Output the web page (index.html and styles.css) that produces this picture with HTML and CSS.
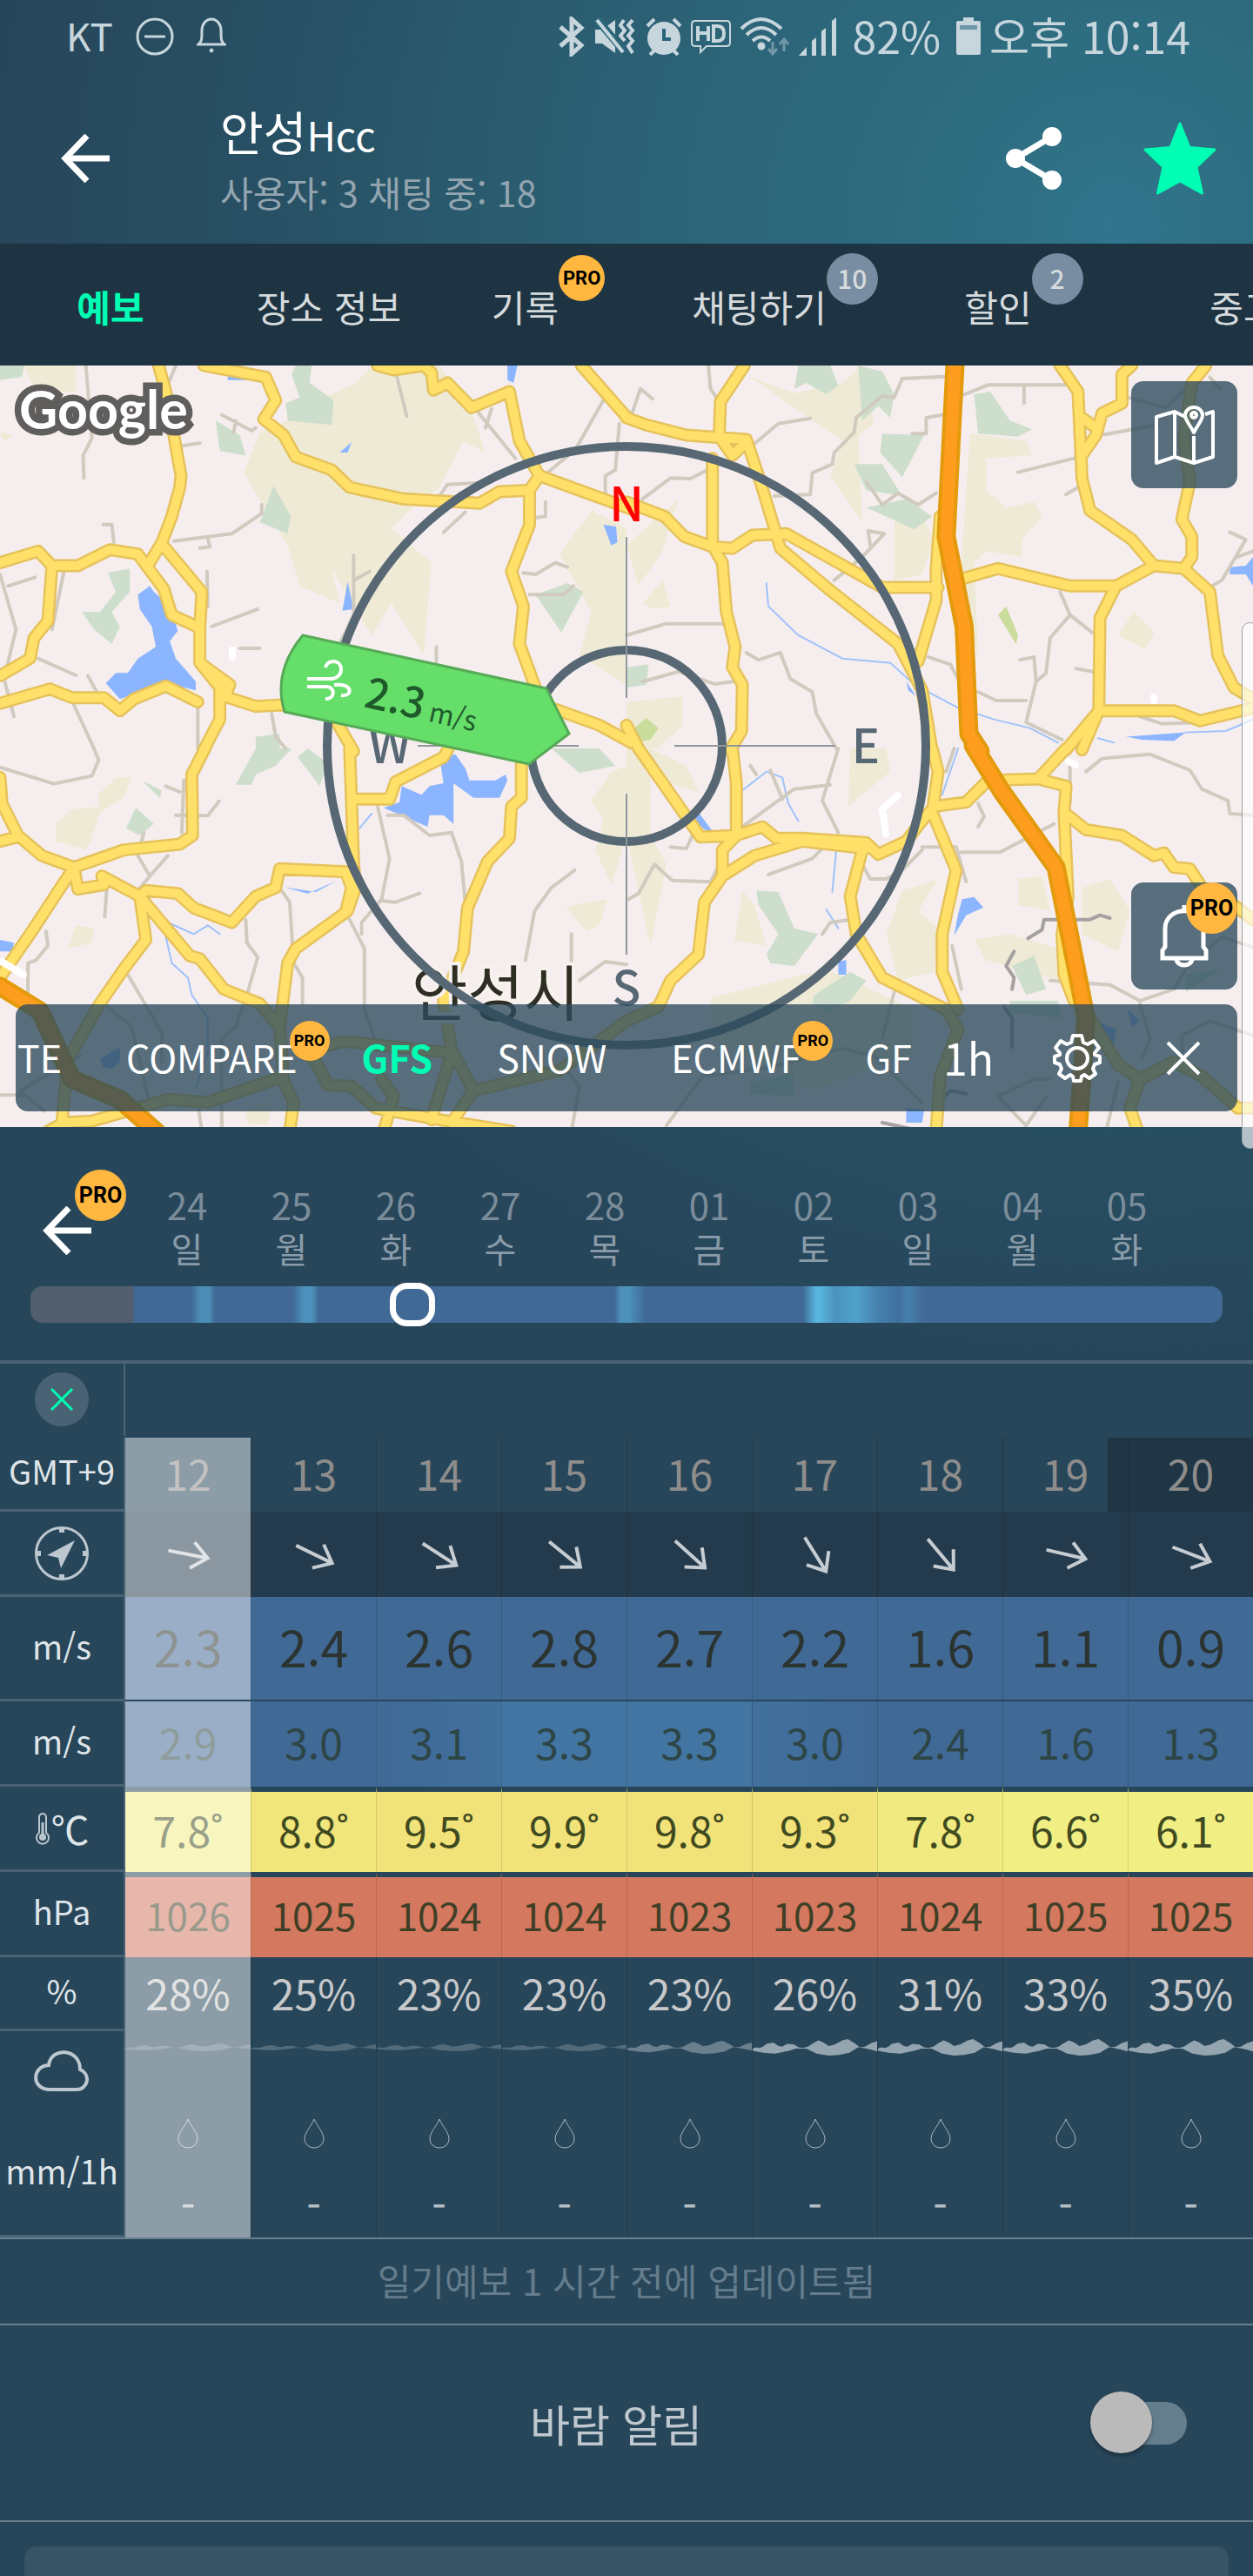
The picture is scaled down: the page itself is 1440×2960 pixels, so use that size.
FILE: index.html
```html
<!DOCTYPE html>
<html lang="ko">
<head>
<meta charset="utf-8">
<meta name="viewport" content="width=device-width, initial-scale=1">
<title>안성Hcc</title>
<link rel="stylesheet" href="styles.css">
</head>
<body>
<svg class="defs" aria-hidden="true">
  <symbol id="back" viewBox="0 0 56 56"><path d="M30 2 5 28l25 26M5 28h51" fill="none" stroke="#fff" stroke-width="7"/></symbol>
  <symbol id="arrow" viewBox="-28 -28 56 56"><path d="M-23 0H22M5-15 23 0 5 15" fill="none" stroke="#c5ccd2" stroke-width="4"/></symbol>
  <symbol id="drop" viewBox="0 0 24 36"><path d="M12 1C9 9 1 16 1 24a11 10 0 0 0 22 0C23 16 15 9 12 1z" fill="none" stroke="#a9b6bf" stroke-width="1"/></symbol>
  <symbol id="wave" viewBox="0 0 144 24" preserveAspectRatio="none"><path d="M0 14 4 12 8 13 12 11 16 7 24 5 30 10 34 11 40 7 48 8 53 12 58 13 64 11 70 6 76 2 82 5 88 10 95 8 104 2 110 0 118 6 124 12 130 11 137 6 144 3V18L136 15 128 13 122 12 112 20 100 23 88 24 74 21 62 14 50 14 42 17 26 21 12 20 0 17z" fill="#cfd8dd"/></symbol>
</svg>

<header class="top">
  <div class="status">
    <span>KT</span>
    <svg width="44" height="44" viewBox="0 0 44 44" class="line"><circle cx="22" cy="22" r="20"/><path d="M10 22h24"/></svg>
    <svg width="34" height="44" viewBox="0 0 34 44" class="line"><path d="M2 31h30c-4-3-4-6-4-16a11 13 0 0 0-22 0c0 10 0 13-4 16z"/><circle cx="17" cy="38" r="2" fill="#c7d6dd" stroke-width="1"/></svg>
    <div class="status-right">
      <svg width="30" height="46" viewBox="0 0 30 46" class="line thick"><path d="M2 12 26 33 15 43V3l11 10L2 34"/></svg>
      <svg width="50" height="46" viewBox="2 0 50 46" class="solid"><path d="M4 15h8L27 4v38L12 31H4z"/><path d="M6 3l32 38" stroke="#2d667b" stroke-width="9"/><path d="M6 4l30 37" stroke="#c7d6dd" stroke-width="4"/><path d="M37 4l-4 6 5 6-5 6 5 6M47 4l-5 6 5 6-5 6 5 6-5 6 5 8" fill="none" stroke="#c7d6dd" stroke-width="4"/></svg>
      <svg width="42" height="44" viewBox="0 0 42 44" class="solid"><circle cx="21" cy="24" r="19"/><path d="M2 10l8-8M40 10l-8-8M10 38l-5 5M32 38l5 5" stroke="#c7d6dd" stroke-width="4"/><path d="M21 13v12h8" fill="none" stroke="#2d667b" stroke-width="4"/></svg>
      <svg width="46" height="40" viewBox="0 0 46 40" class="line"><path d="M5 2h36q4 0 4 4v21q0 4-4 4H18l-7 7v-7H5q-4 0-4-4V6q0-4 4-4z" stroke-width="2"/><path d="M8 8v17M20 8v17M8 16h12M26 8v17h5q7 0 7-8.500T31 8z" stroke-width="4"/></svg>
      <svg width="58" height="46" viewBox="0 0 58 46" class="line"><path d="M2 14q22-22 46 0M8 21q17-16 34 0M15 28q10-9 20 0" stroke-width="4"/><circle cx="25" cy="34" r="3" class="solid"/><path d="M38 29v14m-5-6 5 6 5-6M51 40V26m-5 6 5-6 5 6" opacity=".45"/></svg>
      <svg width="44" height="44" viewBox="0 0 44 44" class="solid"><path d="M0 44 9 34v10zM15 44V27l5-4v21zM26 44V16l5-4v32zM38 44V4l5-4v44z"/></svg>
      <span class="pct">82%</span>
      <svg width="28" height="44" viewBox="0 0 28 44" class="solid"><path d="M8 0h12v4h6q2 0 2 2v34q0 3-2 3H2q-2 0-2-3V6q0-2 2-2h6z"/><path d="M4 9h20v5H4z" fill="#6c98a8"/></svg>
      <span>오후 10:14</span>
    </div>
  </div>
  <div class="titlebar">
    <button class="icon-btn" aria-label="뒤로"><svg width="56" height="56"><use href="#back"/></svg></button>
    <div class="titles">
      <h1>안성<small>Hcc</small></h1>
      <p>사용자: 3 채팅 중: 18</p>
    </div>
    <button class="icon-btn" aria-label="공유"><svg width="64" height="72" viewBox="0 0 64 72"><path d="M11 36 53 11M11 36l42 25" stroke="#fff" stroke-width="7"/><g fill="#fff"><circle cx="11" cy="36" r="11"/><circle cx="53" cy="11" r="11"/><circle cx="53" cy="61" r="11"/></g></svg></button>
    <button class="icon-btn" aria-label="즐겨찾기"><svg width="84" height="84" viewBox="0 0 84 84"><path d="M42 2 53 29.500 82 32 61 52 67.500 82 42 68 16.500 82 23 52 2 32 31 29.500z" fill="#00ffb4" stroke="#00ffb4" stroke-width="3" stroke-linejoin="round"/></svg></button>
  </div>
</header>

<nav class="tabs">
  <a href="#forecast" class="active">예보</a>
  <a href="#spot">장소 정보</a>
  <a href="#history">기록<b class="badge pro mid">PRO</b></a>
  <a href="#chat">채팅하기<b class="badge count">10</b></a>
  <a href="#deals">할인<b class="badge count">2</b></a>
  <a href="#used" class="last">중고</a>
</nav>

<section class="map">
  <svg class="canvas" viewBox="0 0 1440 875" preserveAspectRatio="xMidYMid slice">
    <defs>
      <g id="roads">
        <path transform="scale(.4592 .3333)" d="M397 0 415 90 435 240 453 380 450 420 430 520 405 610 370 690M0 680 95 640 130 690 195 690 275 635 345 650 410 770 430 860 500 905M405 615 505 780 500 905 500 1025 575 1100 565 1140M500 1025 550 1110 550 1220 510 1325M130 690 120 880 85 940 75 1010 0 1070M0 1165 125 1115 180 1145 260 1145 300 1190 335 1150 415 1105 495 1160M560 1140 640 1175 705 1170 830 1200 885 1330M510 0 665 40 690 120 660 185 710 240 740 315 830 360 875 420 1010 460 1200 475 1250 435 1325 430 1350 380 1300 260 1275 90 1180 145 1120 60 1085 85 1080 25 1060 0 985 15 945 0M1350 380 1580 495M1325 430 1325 550 1280 710 1310 830 1300 960 1340 1110M1390 1185 1500 1240 1580 1300M1455 0 1570 180"/>
        <path transform="translate(720) scale(.4592 .3333)" d="M295 0 235 125 232 245 265 310 300 265M0 180 50 205 150 240 300 255 335 400 370 560 385 630 505 770 680 960 740 1120 765 1330M215 320V620L240 680 250 850 272 970 265 1040 290 1100 288 1260 260 1325M0 470 95 520 145 590 215 625 265 630 315 585 400 580 640 765 780 765M785 520 775 700 775 810 730 1020M840 735 930 700 1110 760 1225 760 1320 690 1395 700 1415 660 1415 590 1390 530 1410 400 1395 250 1415 60 1450 0M1085 0 1130 90 1140 390 1160 500 1265 600 1320 690M1265 0 1240 30 1240 130 1190 165 1175 240 1140 310M1140 180 1180 220M1225 760 1185 870 1182 1190 1100 1325M1182 1190 1140 1325M1182 1190 1370 1190 1435 1225 1570 1180M1395 700 1460 780 1480 1000 1520 1110 1568 1150"/>
        <path transform="translate(0 440) scale(.4592 .3333)" d="M515-5 480 90 482 300 450 330 310 350 185 410 105 370 45 300 5 190 0 100M0 320 45 305M185 410 75 640 0 790M185 410 195 485 260 470 255 440 350 510 475 715 500 725 560 830 650 880 700 960 710 1150 735 1220 725 1320M350 510 365 490 445 500 485 550 580 600 640 510 690 480 700 415 865 425 880 480 865 565 740 690 720 740 700 960M350 510 365 660 310 760 250 880 170 1070 155 1290M875 0 885 400 890 480 870 560M880 175 975 175 990 115 1110 30 1130-20M1305 40 1305 170 1280 200 1275 310 1220 390 1170 550 1160 700 1110 870 1130 1040 1185 1180 1130 1290M120 1320 160 1290 230 1285 420 1210 520 1220 690 1140M780 1040 860 1010 1130 1050M740 1010 790 1080 820 1160 880 1165 940 1240 1100 1280 1280 1320M1185 1180 1400 1110 1470 1040 1568 940M955 1140 985 1200 960 1320M1130 1050 1080 1280"/>
        <path transform="translate(720 440) scale(.4592 .3333)" d="M0-80 30 0 185 305 275 300 340 270 375 310 440 310 600 325 630 365 700 320 745 240 770 200 850 185 905 110 1030 105 1100 0M440 320 600 345M265 0 275 120 275 300 240 350 240 440 195 530 180 710 110 800 80 890 0 940M240 440 320 370 440 320M590 350 560 510 575 640 640 790 800 900 830 970 785 1130 775 1320M765 0 780 80 765 220 825 420 790 640 790 770 830 900M1030 105 1100 130 1095 220 1150 280 1240 300 1320 370 1345 360 1370 410 1410 415 1450 500M1095 220 1105 510 1090 640 1095 780 1120 870M1520 540 1568 590M1160 930 1230 1090 1285 1140 1370 1080 1440 1130 1530 1240 1568 1240M1285 1140 1260 1240 1280 1320"/>
      </g>
      <g id="highway">
        <path transform="translate(720) scale(.4592 .3333)" d="M822 0 800 590 845 900 857 1270 885 1330"/>
        <path transform="translate(0 440) scale(.4592 .3333)" d="M0 820 100 905 180 1140 300 1210 390 1320"/>
        <path transform="translate(720 440) scale(.4592 .3333)" d="M868-10 940 150 1075 410 1120 720 1150 930 1130 1320"/>
      </g>
    </defs>
    <rect width="1440" height="875" fill="#f6eeee"/>
    <g fill="#efead6">
      <path transform="scale(.4592 .3333)" d="M780 130 890 60 930 0 1100 0 1180 160 1215 300 1160 260 1100 420 1040 480 980 560 1080 680 1060 1000 980 820 930 930 830 700 850 820 750 760 720 620 610 370 650 230 740 180zM60 0 190 0 190 90 90 95zM1480 500 1568 560V1100L1450 1000 1480 850 1400 650zM0 230 30 240 10 265z"/>
      <path transform="translate(720) scale(.4592 .3333)" d="M310 40 420 95 540 60 590 0 620 200 580 240 590 540 510 380 540 260zM860 235 1000 260 1015 310 900 320 900 430 950 490 1020 470 1040 520 990 600 990 660 900 640 870 680 880 1000 830 830zM670 540 740 520 770 600 740 720 670 740zM1270 845 1320 920 1300 980 1230 930zM0 620 130 460 90 640 30 760zM40 820 90 740 110 830 70 840zM0 1160 140 1140 140 1240 80 1320H0z"/>
      <path transform="translate(0 440) scale(.4592 .3333)" d="M290 100 330 100 310 170 250 220 230 310 215 350 140 320 140 260 180 210 250 200 245 160zM190 610 235 620 230 670 170 690zM1530 80 1568 60V300L1530 470 1490 350 1510 250 1480 180zM1415 550 1450 535 1520 520 1500 610 1470 630zM610 1240 680 1220 670 1300 620 1290z"/>
      <path transform="translate(720 440) scale(.4592 .3333)" d="M0-10 60 0 150 60 180 150 60 100 60 300 100 400 60 680 0 300zM560 0H650L660 80 555 200zM690 490 780 450 730 560 780 620 770 770 680 800 650 640zM290 490 320 540 350 680 270 660zM980 450 1040 440 1060 560 980 540zM1140 480 1210 450 1260 560 1230 700 1140 640zM870 660 960 640 1080 690 1080 800 900 730zM210 860 500 760 720 900 720 1050 470 1180 210 1000z"/>
    </g>
    <g fill="#cddfcc">
      <path transform="scale(.4592 .3333)" d="M740 0H780L775 60 835 120 830 205 720 190 715 130 750 110 730 30zM540 190 600 240 615 310 550 295zM685 415 728 520 720 580 650 540zM270 715 325 700 325 780 280 850 300 900 280 960 235 910 205 850 250 850 290 780zM0 0H60L55 40 0 50zM1340 790 1420 750 1460 780 1405 920zM640 1280 700 1270 700 1320H640z"/>
      <path transform="translate(720) scale(.4592 .3333)" d="M430 0H510L530 70 500 100 450 60 420 80zM580 0 640 20 670 100 660 180 630 140 590 190zM870 100 910 90 960 190 1015 220 980 245 880 235zM640 235 745 240 690 385 635 300zM570 340 640 340 690 450 600 430zM600 490 700 460 765 520 720 565zM0 1040 55 1030 50 1100 0 1110z"/>
      <path transform="translate(0 440) scale(.4592 .3333)" d="M640 0H730L690 60 640 90 630 125 590 125zM745 30 770 0 820 50 800 130zM355 110 405 145 400 170zM340 205 385 260 350 300 315 275zM1380 0H1500L1540 60 1450 85z"/>
      <path transform="translate(720 440) scale(.4592 .3333)" d="M325 490 380 495 420 620 480 640 420 750 360 740 350 710 380 640 330 540zM470 850 560 770 600 800 560 870 500 910 465 880zM965 750 1020 715 1050 830 1000 850zM960 870 1080 870 1090 930 960 910zM1400 780 1490 760 1400 840zM310 1150 420 1120 420 1200 310 1190z"/>
      <path transform="translate(720) scale(.4592 .3333)" fill="#c9dc9b" d="M930 860 950 830 980 930 975 960zM10 1260 50 1215 80 1250 60 1290 20 1300z"/>
    </g>
    <g fill="#8cb5ff">
      <path transform="scale(.4592 .3333)" d="M345 790 375 760 385 780 410 810 430 850 445 915 425 950 440 1010 490 1090 490 1120 415 1095 300 1150 265 1095 290 1060 320 1060 345 1010 390 970 380 900 350 840zM850 300 880 265 870 300zM570 35H620V50H570zM1270 0H1295L1285 60 1270 50zM1510 548 1542 555 1545 610 1530 620zM870 745 885 840 857 845z"/>
      <path transform="translate(720) scale(.4592 .3333)" d="M1510 695 1550 690 1568 660V760L1550 720 1510 720zM1250 1280 1400 1265 1370 1295 1290 1290zM700 1090 725 1140 705 1120z"/>
      <path transform="translate(0 440) scale(.4592 .3333)" d="M1100 30 1140 20 1165 70 1175 110 1240 110 1265 90 1270 110 1250 170 1185 170 1135 120 1135 260 1110 230 1075 230 1070 270 960 205 1000 185 1005 130 1055 160 1075 130 1110 120zM710 478 770 500 845 455 790 495zM0 660 35 670 30 700 0 700zM250 1070 300 1030 300 1080 280 1105 260 1100z"/>
      <path transform="translate(720 440) scale(.4592 .3333)" d="M840 520 870 512 893 548 850 575 820 645 830 570zM530 735 550 730V780H530zM180 220 215 285 195 280 170 245zM1180 940 1225 970 1220 1020zM1255 900 1285 940 1265 960zM700 1240 745 1245 740 1290 700 1290z"/>
    </g>
    <g class="stream">
      <path transform="translate(720) scale(.4592 .3333)" d="M350 750 355 830 430 930 540 1010 660 1025 720 1100 830 1180 920 1220 1010 1250 1080 1300M1180 1285 1220 1300M1400 1265 1500 1260 1568 1220"/>
      <path transform="translate(0 440) scale(.4592 .3333)" d="M420 600 485 640 520 610 550 640M415 650 430 740 470 790 480 850 520 930 520 1050 490 1170M930 225 900 275"/>
      <path transform="translate(720 440) scale(.4592 .3333)" d="M290 145 350 80 390 100 405 190 430 250M525 350 515 495M830 0 790 160M500 555 530 620"/>
    </g>
    <g class="lane">
      <path transform="scale(.4592 .3333)" d="M215 0 230 250 208 310 210 388M435 605 580 580 655 510 655 480M500 630 525 625 520 595M285 610 280 548H258M640 215 630 225 555 170M590 190 585 230M440 280 500 268M990 20 1018 175M1190 150 1290 320M1215 215 1230 150M1510 120 1440 290 1370 370M1550 200 1540 360 1515 380 1515 440M885 655V860L850 960M885 740 925 710M0 720 40 910 10 1080 35 1210M20 760 88 730M95 1010 190 1068M160 710 130 910M185 1170 235 1320M220 1070 240 1120M530 900 645 840M518 710 520 830M495 1170V1320M1110 575 1165 505M1100 450 1120 410 1190 405M1310 715 1340 720 1390 680 1420 695M1325 790 1410 790 1435 760M440 0 425 50M1365 470V520L1340 525M680 1200 690 1280 715 1320M1092 970V1040M600 975H650"/>
      <path transform="translate(720) scale(.4592 .3333)" d="M65 115 35 80 15 160M205 0 210 80 225 110M320 270 380 200 460 182M795 38 690 45 670 110 640 105 575 180 570 230 520 300 515 340 465 370 460 445 370 450M845 100 905 67 1100 67M995 70V130M980 368 1120 320M1195 238 1330 205M1240 105 1350 145 1400 80M1460 40 1485 80M40 460 110 388 160 390 210 355M600 400 640 480 680 440 730 480 775 440M715 235H750V180L790 170M605 570 645 580 590 660 520 740M605 570 610 620M0 930 100 890 240 890M300 990 330 1015 385 990 410 1080 465 1125 475 1200 525 1320M40 1090 130 1055 220 1098 265 1090M1085 780 1110 860 1060 940 1050 1060 1025 1090 1000 1230 1090 1290M1110 860 1165 920M985 1015 1020 1005 1025 1090M880 1125 925 1155 1000 1155M755 1005 810 1030 830 1080M1510 575 1550 600 1490 740 1440 780M1530 660 1568 640M1285 1210 1340 1235 1440 1230M1125 1045 1165 1055M1100 445 1130 420"/>
      <path transform="translate(0 440) scale(.4592 .3333)" d="M0 65 135 122 230 95 247 40 235 0M460 110 455 290M415 130 450 150M440 230 520 232 548 182M360 290 345 370 375 440 420 370M375 440 345 490M267 490 262 580M115 630 120 680 90 730 70 740V850M320 780 405 980V1080M260 880 330 960 370 1200M615 590 618 670 645 720 620 840 590 960 555 1000V1320M705 490 725 530 735 740 757 790V880M875 590 912 690V900L940 1010M945 200 975 380 955 520 905 600V640M955 525 990 530 1050 500M970 230 1010 230 1075 300 1130 290 1155 390 1165 540M1438 420 1380 480 1338 560 1315 730M1430 640V780M1450 800 1515 735 1568 745M50 1180 200 1060M50 1180 110 1250M0 1195H60M1420 1110 1450 1170 1430 1320M495 1220 505 1320"/>
      <path transform="translate(720 440) scale(.4592 .3333)" d="M530 0 490 180 530 290M510 125 420 140 290 270M310 60 325 90M360 75 390 175M740 340H825L850 460M820 0 800 80M835 358H935L1070 260M880 190 895 235 880 270M740 350 690 420 650 450 610 450 590 400M5 520 30 500 70 400 115 455 210 460 240 380M110 340 150 345 165 300M355 435 465 380 490 345M490 640 510 600 560 590M815 680 838 830M1110 60V190M1150 80 1190 35 1310 20 1410 75 1440 140 1505 180 1510 225 1568 230M1060 800 1210 815 1285 870 1370 830 1400 760 1490 650 1568 685M1285 880 1310 1000 1290 1070M100 1300 190 1130 360 1100 540 1035 620 1060 740 1220M670 840 640 1000M930 1200 1020 1140 1060 1140M930 1200 1000 1300 1050 1200M1390 1070V990L1460 940 1568 990M1230 1150 1200 1320"/>
      <path class="ridge" transform="translate(720 440) scale(.4592 .3333)" d="M1005 655 1040 625 1045 590 1160 590 1185 575 1210 585M970 700 950 750 970 790 965 830M945 890 965 930V1030M640 1290 740 1320M790 1210 810 1180 850 1190"/>
    </g>
    <use href="#roads" class="casing"/>
    <use href="#roads" class="road"/>
    <use href="#highway" class="hw-casing"/>
    <use href="#highway" class="hw"/>
    <g fill="none" stroke="#fff" stroke-width="8" stroke-linecap="round"><path d="M267 335v-8M1326 385v-4M1018 538l-4-28 18-16M1228 455l8 4M2 685l25 15"/></g>
    <text x="473" y="748" class="city">안성시</text>
    <text x="22" y="73" class="google">Google</text>
    <g class="rings"><circle cx="720" cy="437" r="344"/><circle cx="720" cy="437" r="110"/></g>
    <path d="M720 197v185M720 492v185M480 437h185M775 437h185" stroke="#8f979d" stroke-width="2"/>
    <g class="points">
      <text x="720" y="179" class="north">N</text>
      <text x="995" y="457">E</text>
      <text x="448" y="457">W</text>
      <text x="720" y="735">S</text>
    </g>
    <path d="M348 310 628 371 654 423 608 458 327 398Q313 352 348 310z" fill="#65de6a" stroke="#56aa56" stroke-width="3"/>
    <g fill="none" stroke="#fff" stroke-width="4"><path d="M353 360h27c15 0 16-20 3-20q-7 0-9 7M353 369h22c11 0 10 15-1 14M384 367c22-3 22 14 8 12"/></g>
    <g transform="rotate(12.500 417 392)" fill="#1f5a2a"><text x="417" y="392" class="speed">2.3</text><text x="493" y="392" class="unit">m/s</text></g>
  </svg>
  <div class="map-tools">
    <button class="tile" aria-label="지도 종류"><svg width="70" height="70" viewBox="0 0 70 70" fill="none" stroke="#fff" stroke-width="4" stroke-linejoin="round"><path d="M36 14 24 8 3 14v53l21-7 22 7 22-7V8l-9 3M24 8v52M46 36v31"/><path d="M46 32C41 22 36 18 36 12a10 9 0 0 1 20 0c0 6-5 10-10 20z"/><circle cx="46" cy="12" r="3"/></svg></button>
    <button class="tile" aria-label="알림"><svg width="56" height="72" viewBox="0 0 56 72" fill="none" stroke="#fff" stroke-width="5"><path d="M28 0v6M6 48V27C6 0 50 0 50 27v21l3 4v9H3v-9zM19 62a9 7 0 0 0 18 0"/></svg><b class="badge pro big corner">PRO</b></button>
  </div>
  <div class="models">
    <div class="scroller">
      <button>TE</button>
      <button>COMPARE<b class="badge pro small">PRO</b></button>
      <button class="on">GFS</button>
      <button>SNOW</button>
      <button>ECMWF<b class="badge pro small">PRO</b></button>
      <button>GFS</button>
    </div>
    <button class="step">1h</button>
    <button aria-label="설정"><svg width="60" height="60" viewBox="-30 -30 60 60" fill="none" stroke="#fff" stroke-width="4" stroke-linejoin="round"><circle r="12"/><path d="M-5-26H5L7-18 12-16 19-20 25-12 20-6V-4L26-2V5L20 7 18 12 21 18 14 23 8 19 5 21 4 26H-4L-5 21-8 19-14 23-21 18-18 12-20 7-26 5V-2L-20-4V-6L-25-12-19-20-12-16-7-18z"/></svg></button>
    <button aria-label="닫기"><svg width="40" height="40" viewBox="0 0 40 40"><path d="M2 2l36 36M38 2 2 38" stroke="#fff" stroke-width="4"/></svg></button>
  </div>
</section>
<div class="edge"></div>

<main>
<section class="days">
  <div class="day-row">
    <button class="prev" aria-label="이전"><svg width="56" height="56"><use href="#back"/></svg><b class="badge pro big">PRO</b></button>
    <ol>
      <li>24<span>일</span></li><li>25<span>월</span></li><li>26<span>화</span></li><li>27<span>수</span></li><li>28<span>목</span></li><li>01<span>금</span></li><li>02<span>토</span></li><li>03<span>일</span></li><li>04<span>월</span></li><li>05<span>화</span></li>
    </ol>
  </div>
  <input type="range" min="0" max="1000" value="313" aria-label="날짜">
</section>

<table id="forecast">
  <tr class="blank"><th><button class="clear" aria-label="지우기"><svg width="26" height="26" viewBox="0 0 26 26"><path d="M1 1l24 24M25 1 1 25" stroke="#00ffb4" stroke-width="3"/></svg></button></th><td colspan="9"></td></tr>
  <tr class="hours"><th>GMT+9</th><td class="now">12</td><td>13</td><td>14</td><td>15</td><td>16</td><td>17</td><td>18</td><td class="dusk">19</td><td class="night">20</td></tr>
  <tr class="dir"><th><svg width="64" height="64" viewBox="-32 -32 64 64"><circle r="29.500" fill="none" stroke="#bcc7cf" stroke-width="3"/><path d="M-3-30h6v6h-6zM-3 24h6v6h-6zM-30-3h6v6h-6zM24-3h6v6h-6zM15-15-1 17-4 5-17 2z" fill="#bcc7cf"/></svg></th>
    <td class="now"><svg style="rotate:11deg"><use href="#arrow"/></svg></td><td><svg style="rotate:26deg"><use href="#arrow"/></svg></td><td><svg style="rotate:33deg"><use href="#arrow"/></svg></td><td><svg style="rotate:39deg"><use href="#arrow"/></svg></td><td><svg style="rotate:42deg"><use href="#arrow"/></svg></td><td><svg style="rotate:58deg"><use href="#arrow"/></svg></td><td><svg style="rotate:50deg"><use href="#arrow"/></svg></td><td><svg style="rotate:13deg"><use href="#arrow"/></svg></td><td><svg style="rotate:21deg"><use href="#arrow"/></svg></td></tr>
  <tr class="wind"><th>m/s</th><td class="now">2.3</td><td>2.4</td><td>2.6</td><td>2.8</td><td>2.7</td><td>2.2</td><td>1.6</td><td>1.1</td><td>0.9</td></tr>
  <tr class="gust"><th>m/s</th><td class="now">2.9</td><td>3.0</td><td class="rise">3.1</td><td class="peak">3.3</td><td class="peak">3.3</td><td class="fall">3.0</td><td>2.4</td><td>1.6</td><td>1.3</td></tr>
  <tr class="temp"><th><svg width="18" height="38" viewBox="0 0 18 38" fill="none" stroke="#bcc7cf" stroke-width="2"><path d="M5 24V6a4 4 0 0 1 8 0v18a7 7 0 1 1-8 0z"/><path d="M9 12v14" stroke-width="3"/><circle cx="9" cy="29" r="3" fill="#bcc7cf"/></svg><span>℃</span></th><td class="now">7.8˚</td><td class="c8">8.8˚</td><td class="c9">9.5˚</td><td class="c9">9.9˚</td><td class="c9">9.8˚</td><td class="c9">9.3˚</td><td class="c7">7.8˚</td><td>6.6˚</td><td>6.1˚</td></tr>
  <tr class="press"><th>hPa</th><td class="now">1026</td><td>1025</td><td>1024</td><td>1024</td><td>1023</td><td>1023</td><td>1024</td><td>1025</td><td>1025</td></tr>
  <tr class="humid"><th>%</th><td class="now">28%</td><td>25%</td><td>23%</td><td>23%</td><td>23%</td><td>26%</td><td>31%</td><td>33%</td><td>35%</td></tr>
  <tr class="cloud"><th><svg width="64" height="48" viewBox="0 0 64 48" fill="none" stroke="#bcc7cf" stroke-width="4"><path d="M18 45C-3 45-3 18 17 17 19-4 53-3 53 22 66 28 62 45 49 45z"/></svg></th>
    <td class="now"><svg class="thin"><use href="#wave"/></svg></td><td><svg class="thin"><use href="#wave"/></svg></td><td><svg class="thin"><use href="#wave"/></svg></td><td><svg class="thin"><use href="#wave"/></svg></td><td><svg class="medium"><use href="#wave"/></svg></td><td><svg><use href="#wave"/></svg></td><td><svg><use href="#wave"/></svg></td><td><svg><use href="#wave"/></svg></td><td><svg><use href="#wave"/></svg></td></tr>
  <tr class="rain"><th>mm/1h</th>
    <td class="now"><svg><use href="#drop"/></svg>-</td><td><svg><use href="#drop"/></svg>-</td><td><svg><use href="#drop"/></svg>-</td><td><svg><use href="#drop"/></svg>-</td><td><svg><use href="#drop"/></svg>-</td><td><svg><use href="#drop"/></svg>-</td><td><svg><use href="#drop"/></svg>-</td><td><svg><use href="#drop"/></svg>-</td><td><svg><use href="#drop"/></svg>-</td></tr>
</table>

<p class="updated">일기예보 1 시간 전에 업데이트됨</p>
<div class="alert">
  <label for="wind-alert">바람 알림</label>
  <input type="checkbox" role="switch" id="wind-alert">
</div>
<div class="next"><div class="card"></div></div>
</main>
</body>
</html>
```
FILE: styles.css
```css
* { box-sizing: border-box; }

body {
  margin: 0;
  position: relative;
  overflow-x: hidden;
  color: #fff;
  font-family: "Noto Sans CJK KR", "Noto Sans", sans-serif;
  background: #27465a radial-gradient(circle 1300px at 89% 260px, #30758f 0, #2f7084 8%, #2c6377 40%, #285064 75%, #27465a 100%) no-repeat;
}

button { border: 0; padding: 0; background: none; color: inherit; font: inherit; }
svg { display: block; flex: none; }
h1, p, ol { margin: 0; padding: 0; font-weight: 400; }
.defs { position: absolute; width: 0; height: 0; }

/* header */
.top { height: 280px; padding-top: 6px; }
.status { display: flex; align-items: center; height: 72px; padding: 0 72px 0 76px; gap: 26px; color: #c7d6dd; font-size: 44px; line-height: 64px; }
.status span { padding-bottom: 4px; }
.status-right { display: flex; align-items: center; gap: 10px; margin-left: auto; font-size: 50px; }
.status .pct { margin: 0 8px 0 7px; }
.line { fill: none; stroke: #c7d6dd; stroke-width: 3; }
.thick { stroke-width: 5; }
.solid { fill: #c7d6dd; }
.titlebar { display: flex; align-items: center; height: 208px; padding: 0 42px 0 70px; }
.titles { flex: 1; padding: 4px 0 0 127px; }
h1 { font-size: 54px; line-height: 64px; }
h1 small { font-size: 46px; }
.titles p { padding-top: 4px; color: #93a5b0; font-size: 41px; line-height: 60px; }
.icon-btn + .icon-btn { margin-left: 94px; }

/* tabs */
.tabs { display: grid; grid-template-columns: 254px 248px 203px 335px 214px 350px; align-items: center; height: 140px; overflow: hidden; background: #1e3442; font-size: 42px; line-height: 60px; }
.tabs a { position: relative; justify-self: center; padding-top: 4px; color: #d5dadd; text-decoration: none; }
.tabs .active { color: #00ffb4; font-weight: 700; }

.badge { position: absolute; display: flex; align-items: center; justify-content: center; border-radius: 50%; font-weight: 700; }
.pro { background: #ffb740; color: #000; font-family: Roboto, sans-serif; }
.mid { left: 100%; top: -25px; width: 53px; height: 53px; font-size: 22px; }
.small { left: 100%; top: -11px; width: 46px; height: 46px; margin-left: -9px; font-size: 18px; }
.big { width: 59px; height: 59px; font-size: 25px; }
.corner { top: 0; right: 0; }
.count { left: 100%; top: -27px; width: 59px; height: 59px; padding-bottom: 4px; background: #788da1; font-size: 30px; font-weight: 500; }

/* map */
.map { position: relative; display: flex; flex-direction: column; justify-content: space-between; height: 875px; padding: 18px; overflow: hidden; }
.canvas { position: absolute; inset: 0; width: 100%; height: 100%; }
.canvas path { vector-effect: non-scaling-stroke; }
.casing, .road, .hw, .hw-casing, .lane, .stream, .rings { fill: none; stroke-linejoin: round; stroke-linecap: round; }
.casing { stroke: #e6c25c; stroke-width: 15px; }
.road { stroke: #ffe16a; stroke-width: 10px; }
.hw-casing { stroke: #e39a0c; stroke-width: 22px; }
.hw { stroke: #ff9d1e; stroke-width: 14px; }
.lane { stroke: #d0cabf; stroke-width: 4px; }
.ridge { stroke: #a5a1a1; }
.stream { stroke: #9fc2fb; stroke-width: 2px; }
.rings { stroke: #576874; stroke-width: 10px; }
.city { font-size: 70px; fill: #2e2e24; stroke: #f8f2ee; stroke-width: 8px; paint-order: stroke; }
.google { font: 700 61px Lato, sans-serif; fill: #fff; stroke: #5f5e5c; stroke-width: 15px; paint-order: stroke; }
.points { font-size: 54px; font-weight: 500; fill: #576874; text-anchor: middle; }
.north { fill: #f00; }
.speed { font-size: 48px; font-weight: 500; }
.unit { font-size: 31px; }

.map-tools { position: relative; display: flex; flex-direction: column; align-items: flex-end; gap: 453px; }
.tile { position: relative; display: grid; place-items: center; width: 122px; height: 123px; border-radius: 14px; background: rgba(44, 74, 92, .78); }
.models { position: relative; display: flex; align-items: center; height: 123px; padding-right: 42px; border-radius: 14px; background: rgba(44, 74, 92, .78); font-size: 43px; line-height: 60px; }
.scroller { display: flex; flex: 1; gap: 74px; height: 100%; padding-left: 2px; margin-right: 36px; overflow: hidden; align-items: center; }
.scroller button { position: relative; flex: none; padding-bottom: 4px; }
.on { color: #00ffb4; font-weight: 700; }
.step { margin-right: 66px; padding-bottom: 4px; font-size: 50px; }
.step + button { margin-right: 72px; }
.edge { position: absolute; top: 715px; right: -6px; width: 19px; height: 605px; border: 1px solid #9aa3a8; border-radius: 14px; background: rgba(255, 255, 255, .65); }

/* day slider */
.days { height: 272px; padding: 64px 35px 0; border-bottom: 4px solid #4a6374; }
.day-row { display: flex; height: 119px; }
.prev { position: relative; align-self: flex-start; margin: 27px 0 0 14px; }
.prev .badge { left: 37px; top: -42px; }
.day-row ol { display: grid; grid-template-columns: repeat(10, 1fr); flex: 1; margin: 0 50px; list-style: none; text-align: center; color: #7b8d9a; font-size: 42px; line-height: 50px; }
.day-row span { display: block; color: #8a9ca9; font-size: 40px; }

input[type=range] {
  appearance: none; display: block; width: 100%; height: 42px; margin: 0; border-radius: 14px;
  background: linear-gradient(90deg, #525f6e 0 8.600%, #406996 8.700% 13.500%, #4c8db8 14.200% 15%, #406996 15.500% 22%, #4c91bb 22.900% 23.600%, #406996 24.200% 49%, #4c91bb 49.500% 50.200%, #406996 51.600% 64.800%, #57b7de 65.900% 66.200%, #4c93bf 67.500%, #50a2cb 69.300%, #4782af 71%, #406f9d 72.800%, #4680ad 73.600%, #406996 75%);
}
input[type=range]::-webkit-slider-thumb { appearance: none; width: 52px; height: 50px; border: 7px solid #fff; border-radius: 20px; background: #406996; }

/* forecast table */
table { width: 100%; table-layout: fixed; border-spacing: 0; text-align: center; font-size: 48px; line-height: 60px; }
th, td { position: relative; padding: 0 0 6px; font-weight: 400; }
th { border-right: 2px solid #4a6374; border-bottom: 3px solid #4a6374; color: #dfe5e9; font-size: 38px; white-space: nowrap; }
td + td { border-left: 1px solid rgba(0, 0, 0, .13); }
.now::after { content: ""; position: absolute; inset: 0; background: rgba(255, 255, 255, .47); }
td svg, th svg { margin: 0 auto; }
.blank, .hours, .humid { height: 85px; }
.blank th { border-bottom-color: transparent; }
.clear { display: grid; place-items: center; width: 62px; height: 62px; margin: 6px auto 0; border-radius: 50%; background: #4a6374; }
.hours td { color: #8f8d8c; }
.hours .night { background: #203645; }
.hours .dusk { background: linear-gradient(90deg, transparent 84%, #203645 84%); }
.dir { height: 98px; }
.dir td, .dir th { padding: 0; }
.dir td { background: #243b4d; }
.dir td svg { width: 56px; height: 56px; }
.wind { height: 120px; font-size: 57px; }
.wind td { border-bottom: 2px solid #27465a; background: #406996; color: #2b3431; }
.gust { height: 98px; }
.gust td { background: #406996; color: #2d4545; }
.gust .rise { background: linear-gradient(90deg, #406996, #41709e); }
.gust .peak { background: #4275a1; }
.gust .fall { background: linear-gradient(90deg, #41709e, #406996); }
.temp, .press { height: 98px; }
.temp td, .press td { border-top: 6px solid #27465a; }
.temp .now::after, .press .now::after { top: -6px; }
.temp td { background: #f1ef84; color: #404a20; }
.temp .c7 { background: #f1ea80; }
.temp .c8 { background: #f1e67c; }
.temp .c9 { background: #f1e37a; }
.temp th { padding: 0; font-size: 44px; }
.temp th svg { display: inline-block; margin-right: 1px; }
.press td { background: #d47860; color: #3f3f26; font-size: 44px; }
.humid td { color: #c8c9ca; }
.cloud { height: 92px; }
.cloud th { border-bottom: 0; padding: 0; }
.cloud td { padding: 9px 0 0; vertical-align: top; }
.cloud td svg { width: 100%; height: 19px; opacity: .65; }
.cloud td .medium { height: 15px; margin-top: 2px; opacity: .4; }
.cloud td .thin { height: 9px; margin-top: 5px; opacity: .25; }
.rain { height: 145px; }
.rain td { padding: 6px 0 8px; color: #b3bec5; }
.rain td svg { width: 24px; height: 36px; margin-bottom: 32px; }

/* footer rows */
.updated { padding: 18px 0 21px; border: solid #687f8d; border-width: 2px 0; color: #647c8b; font-size: 42px; line-height: 58px; text-align: center; }
.alert { display: grid; grid-template-columns: 1fr auto 1fr; align-items: center; height: 226px; padding: 0 76px 0 52px; border-bottom: 2px solid #687f8d; color: #bfc8ce; font-size: 50px; line-height: 72px; }
.alert label { grid-column: 2; }
.alert input { appearance: none; position: relative; justify-self: end; width: 104px; height: 49px; margin: 0; border-radius: 25px; background: #657e8d; }
.alert input::before { content: ""; position: absolute; left: -7px; top: -12px; width: 71px; height: 71px; border-radius: 50%; background: #bababa; box-shadow: 0 3px 4px rgba(0, 0, 0, .35); }
.next { padding: 28px 28px 0; }
.card { height: 34px; border-radius: 14px 14px 0 0; background: #375366; }
```
